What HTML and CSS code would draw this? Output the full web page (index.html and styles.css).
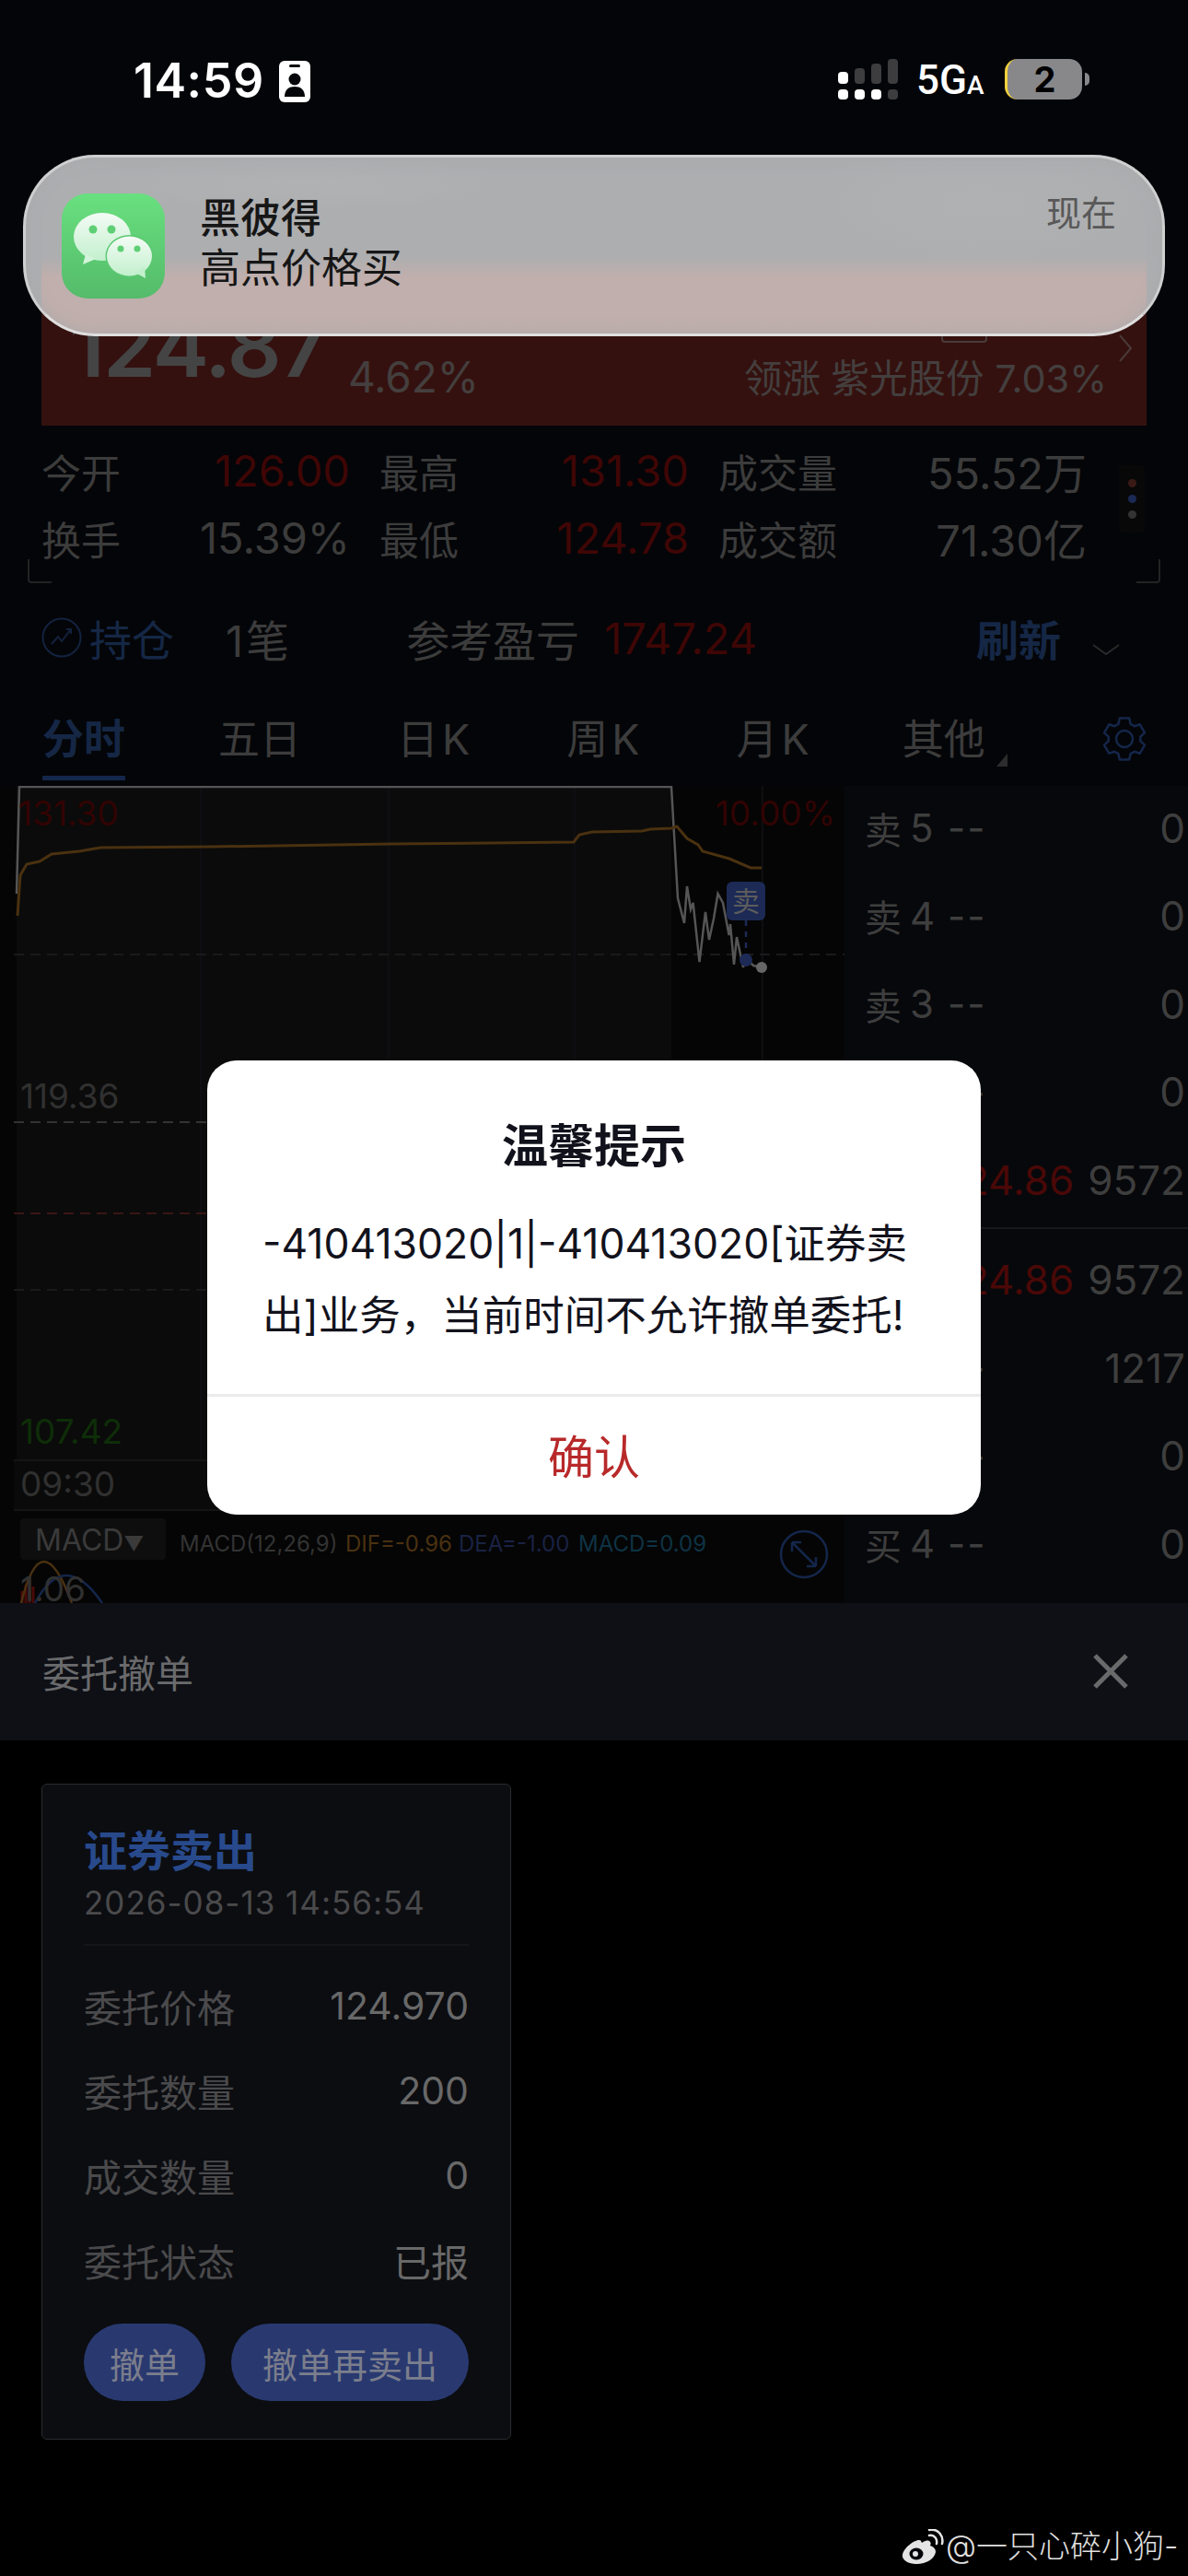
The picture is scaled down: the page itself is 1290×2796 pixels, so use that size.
FILE: index.html
```html
<!DOCTYPE html>
<html lang="zh-CN">
<head>
  <meta charset="UTF-8">
  <meta name="viewport" content="width=device-width, initial-scale=1.0">
  <title>委托撤单</title>
  <link rel="stylesheet" href="styles.css">
</head>
<body>
  <div class="screen">
    <header class="status">
      <div class="status-left">
        <span class="time">14:59</span>
        <svg class="focus" viewBox="0 0 34 45">
          <rect width="34" height="45" rx="6" fill="#fff"/>
          <rect x="11" y="4" width="12" height="3" rx="1.5" fill="#040508"/>
          <circle cx="17" cy="20" r="6.5" fill="#040508"/>
          <path d="M6 39c0-8 5-11 11-11s11 3 11 11z" fill="#040508"/>
        </svg>
      </div>
      <div class="status-right">
        <svg class="signal" viewBox="0 0 65 44">
          <rect x="0" y="14" width="11" height="13" rx="4" fill="#fff"/>
          <rect x="18" y="10" width="11" height="17" rx="4" fill="#3d3d3f"/>
          <rect x="36" y="5" width="11" height="22" rx="4" fill="#3d3d3f"/>
          <rect x="54" y="0" width="11" height="27" rx="4" fill="#3d3d3f"/>
          <rect x="0" y="33" width="11" height="11" rx="4" fill="#fff"/>
          <rect x="18" y="33" width="11" height="11" rx="4" fill="#fff"/>
          <rect x="36" y="33" width="11" height="11" rx="4" fill="#fff"/>
          <rect x="54" y="33" width="11" height="11" rx="4" fill="#3d3d3f"/>
        </svg>
        <span class="net">5G<small>A</small></span>
        <div class="battery"><span>2</span></div>
        <i class="battery-tip"></i>
      </div>
    </header>

    <section class="quote">
      <div class="quote-price">124.87</div>
      <div class="quote-pct">4.62%</div>
      <div class="quote-lead">
        <i class="lead-box"></i>
        <span>领涨 紫光股份 7.03%</span>
      </div>
      <svg class="quote-arrow" viewBox="0 0 16 32"><path d="M2 2l12 14L2 30" /></svg>
    </section>

    <section class="stats">
      <div class="stat"><span>今开</span><b class="red">126.00</b></div>
      <div class="stat"><span>最高</span><b class="red">131.30</b></div>
      <div class="stat"><span>成交量</span><b>55.52万</b></div>
      <div class="stat"><span>换手</span><b>15.39%</b></div>
      <div class="stat"><span>最低</span><b class="red">124.78</b></div>
      <div class="stat"><span>成交额</span><b>71.30亿</b></div>
      <div class="dots"><i></i><i></i><i></i></div>
      <i class="corner corner-left"></i>
      <i class="corner corner-right"></i>
    </section>

    <section class="hold">
      <svg class="hold-icon" viewBox="0 0 44 44">
        <circle cx="22" cy="22" r="20.5"/>
        <path d="M11 29l7-8 4 5 10-13M27 13h5v5"/>
      </svg>
      <span class="hold-name">持仓</span>
      <span class="hold-count">1笔</span>
      <span class="hold-label">参考盈亏</span>
      <span class="red">1747.24</span>
      <span class="hold-refresh">刷新</span>
      <svg class="hold-chevron" viewBox="0 0 32 14"><path d="M2 2l14 10L30 2"/></svg>
    </section>

    <nav class="tabs">
      <a class="tab active">分时</a>
      <a class="tab">五日</a>
      <a class="tab tab-k tab-day">日K</a>
      <a class="tab tab-k">周K</a>
      <a class="tab tab-k">月K</a>
      <a class="tab more">其他</a>
      <svg class="gear" viewBox="0 0 48 48">
        <path d="M18.800 1.600H29.200L30.600 7.800L34.800 10.200L40.800 8.300L46 17.300L41.300 21.600V26.400L46 30.700L40.800 39.700L34.800 37.800L30.600 40.200L29.200 46.400H18.800L17.400 40.200L13.200 37.800L7.200 39.700L2 30.700L6.700 26.400V21.600L2 17.300L7.200 8.300L13.200 10.200L17.400 7.800Z"/>
        <circle cx="24" cy="24" r="9"/>
      </svg>
    </nav>

    <section class="market">
      <svg class="chart" viewBox="0 853 917 887">
        <rect class="c-under" x="18" y="853" width="711" height="732"/>
        <path class="c-grid" d="M218 853V1585M422 853V1585M624 853V1585M828 853V1585"/>
        <path class="c-dash-dark" d="M15 1036H917M15 1400H917"/>
        <path class="c-dash" d="M15 1218H917"/>
        <path class="c-dash-red" d="M15 1317H917"/>
        <path class="c-line" d="M18 970L21 854H729L736 975L743 1002L746 962L750 987L752.600 980L759.500 1044L766 990L770 1020L775 997L779.500 970L785 980L791.600 1015L793 1003L797 1047L800 1017L807 1050L810 1040L818 1048L827 1050"/>
        <path class="c-avg" d="M19 994L22 950L29 938L43 935L56 927L86 924L109 920L230 919L425 916L623 914L629 906L643 903L697 902L706 900L729 899L735 897L746 910L758 917L763 924L792 932L815 942L827 942"/>
        <text class="c-text c-red" x="20" y="896">131.30</text>
        <text class="c-text c-red" x="907" y="896" text-anchor="end">10.00%</text>
        <rect class="c-mark" x="789" y="957" width="42" height="42" rx="6"/>
        <text class="c-mark-text" x="810" y="989" text-anchor="middle">卖</text>
        <path class="c-mark-link" d="M810 999V1036"/>
        <circle class="c-mark" cx="810" cy="1042" r="7"/>
        <circle class="c-dot" cx="827" cy="1050" r="6"/>
        <text class="c-text" x="22" y="1203">119.36</text>
        <text class="c-text c-green" x="22" y="1567">107.42</text>
        <rect class="c-band" x="15" y="1585" width="902" height="54"/>
        <path class="c-sep" d="M15 1585H917M15 1639H917"/>
        <text class="c-text" x="22" y="1624">09:30</text>
        <rect class="c-pill" x="22" y="1648" width="158" height="45" rx="4"/>
        <text class="c-pill-text" x="38" y="1683">MACD<tspan class="c-caret">▼</tspan></text>
        <text class="c-small" x="195" y="1684">MACD(12,26,9)</text>
        <text class="c-small c-orange" x="375" y="1684">DIF=-0.96</text>
        <text class="c-small c-navy" x="498" y="1684">DEA=-1.00</text>
        <text class="c-small c-teal" x="628" y="1684">MACD=0.09</text>
        <circle class="c-expand" cx="873" cy="1687" r="25"/>
        <path class="c-expand" d="M860 1674l26 26M860 1674v10M860 1674h10M886 1700v-10M886 1700h-10"/>
        <path class="c-bars" d="M24 1740V1727M28 1740V1720M32 1740V1716M36 1740V1722"/>
        <path class="c-arc-o" d="M23 1740Q45 1650 78 1740"/>
        <path class="c-arc-b" d="M38 1740Q70 1680 111 1740"/>
        <text class="c-text" x="22" y="1738">1.06</text>
      </svg>

      <div class="book">
        <div class="level"><span class="side">卖</span><span class="idx">5</span><span class="none">--</span><span class="qty">0</span></div>
        <div class="level"><span class="side">卖</span><span class="idx">4</span><span class="none">--</span><span class="qty">0</span></div>
        <div class="level"><span class="side">卖</span><span class="idx">3</span><span class="none">--</span><span class="qty">0</span></div>
        <div class="level"><span class="side">卖</span><span class="idx">2</span><span class="none">--</span><span class="qty">0</span></div>
        <div class="level"><span class="side">卖</span><span class="idx">1</span><span class="price">124.86</span><span class="qty">9572</span></div>
        <div class="book-line"></div>
        <div class="level"><span class="side">买</span><span class="idx">1</span><span class="price">124.86</span><span class="qty">9572</span></div>
        <div class="level"><span class="side">买</span><span class="idx">2</span><span class="none">--</span><span class="qty">1217</span></div>
        <div class="level"><span class="side">买</span><span class="idx">3</span><span class="none">--</span><span class="qty">0</span></div>
        <div class="level"><span class="side">买</span><span class="idx">4</span><span class="none">--</span><span class="qty">0</span></div>
      </div>
    </section>

    <header class="sheet-head">
      <span>委托撤单</span>
      <svg class="sheet-close" viewBox="0 0 40 40"><path d="M3 3l34 34M37 3L3 37"/></svg>
    </header>

    <main class="sheet-body">
      <article class="order">
        <h2 class="order-type">证券卖出</h2>
        <p class="order-time">2026-08-13 14:56:54</p>
        <div class="order-rows">
          <div class="order-row"><span>委托价格</span><span class="order-val">124.970</span></div>
          <div class="order-row"><span>委托数量</span><span class="order-val">200</span></div>
          <div class="order-row"><span>成交数量</span><span class="order-val">0</span></div>
          <div class="order-row"><span>委托状态</span><span class="order-val">已报</span></div>
        </div>
        <div class="order-actions">
          <button class="pill">撤单</button>
          <button class="pill pill-wide">撤单再卖出</button>
        </div>
      </article>
    </main>

    <div class="banner">
      <svg class="wechat" viewBox="0 0 112 114">
        <defs>
          <linearGradient id="wxBg" x1="0" y1="0" x2="0" y2="1">
            <stop offset="0" stop-color="#69e07f"/>
            <stop offset="1" stop-color="#54bb6a"/>
          </linearGradient>
          <linearGradient id="wxBubble" x1="0" y1="0" x2="0" y2="1">
            <stop offset="0" stop-color="#f4fbf5"/>
            <stop offset="1" stop-color="#c2f0cd"/>
          </linearGradient>
        </defs>
        <rect width="112" height="114" rx="28" fill="url(#wxBg)"/>
        <ellipse cx="44" cy="47" rx="31" ry="26" fill="url(#wxBubble)"/>
        <path d="M26 66l-3 11 14-6z" fill="#d3f4da"/>
        <circle cx="34" cy="39" r="4.500" fill="#5fcf75"/>
        <circle cx="54" cy="39" r="4.500" fill="#5fcf75"/>
        <ellipse cx="73.500" cy="68" rx="26" ry="23" fill="#5cc873"/>
        <ellipse cx="73.500" cy="68" rx="24.500" ry="21.500" fill="url(#wxBubble)"/>
        <path d="M80 86l11 6-1-13z" fill="#c2f0cd"/>
        <circle cx="64" cy="60" r="3.500" fill="#5fcf75"/>
        <circle cx="82" cy="60" r="3.500" fill="#5fcf75"/>
      </svg>
      <div class="banner-text">
        <div class="banner-name">黑彼得</div>
        <div class="banner-msg">高点价格买</div>
      </div>
      <span class="banner-time">现在</span>
    </div>

    <div class="dialog">
      <h1 class="dialog-title">温馨提示</h1>
      <p class="dialog-msg">-410413020|1|-410413020[证券卖出]业务，当前时间不允许撤单委托!</p>
      <button class="dialog-btn">确认</button>
    </div>

    <div class="mark">
      <svg class="weibo" viewBox="0 0 46 38">
        <path d="M30 13c-3-1-5 0-8 2-1-2-1-3-3-3-6 0-17 9-18 16-1 6 7 10 15 10 11 0 20-6 21-13 0-4-3-6-6-7 1-2 1-4-1-5z" fill="#e4e4e4"/>
        <ellipse cx="16" cy="27" rx="7.500" ry="6.500" fill="#040508"/>
        <circle cx="15" cy="27" r="3" fill="#e4e4e4"/>
        <path d="M30 7c6-1 9 4 8 9M30 1c10-2 16 7 14 15" fill="none" stroke="#e4e4e4" stroke-width="2.500" stroke-linecap="round"/>
      </svg>
      <span>@一只心碎小狗-</span>
    </div>
  </div>
</body>
</html>
```

FILE: styles.css
```css
* {
  box-sizing: border-box;
}

html, body {
  margin: 0;
  padding: 0;
  background: #000;
}

body {
  font-family: Inter, "Noto Sans CJK SC", sans-serif;
}

.screen {
  position: relative;
  width: 1290px;
  height: 2796px;
  overflow: hidden;
  display: flex;
  flex-direction: column;
  background: #040508;
  color: #3c3c3c;
}

.red {
  color: #3f0605;
}

/* status bar */
.status {
  height: 290px;
  flex-shrink: 0;
  display: flex;
  justify-content: space-between;
  align-items: flex-start;
  padding: 65px 107px 0 145px;
}

.status-left {
  display: flex;
  align-items: center;
  gap: 16px;
}

.time {
  font-size: 52px;
  line-height: 46px;
  font-weight: 600;
  letter-spacing: 0.500px;
  color: #fff;
}

.focus {
  width: 34px;
  height: 45px;
}

.status-right {
  display: flex;
  align-items: center;
  height: 44px;
  margin-top: -1px;
}

.signal {
  width: 65px;
  height: 44px;
}

.net {
  margin: 8px 0 0 20px;
  width: 74px;
  font-family: Roboto, sans-serif;
  font-size: 44px;
  line-height: 44px;
  font-weight: 500;
  color: #fff;
}

.net small {
  font-size: 28px;
}

.battery {
  margin-left: 22px;
  width: 84px;
  height: 44px;
  border-radius: 14px;
  border-left: 3px solid #f3d23c;
  background: #88888a;
  display: flex;
  align-items: center;
  justify-content: center;
}

.battery span {
  font-size: 38px;
  font-weight: 700;
  color: #000;
}

.battery-tip {
  margin-left: 3px;
  width: 5px;
  height: 14px;
  border-radius: 0 6px 6px 0;
  background: #88888a;
}

/* quote bar behind the notification */
.quote {
  position: relative;
  height: 172px;
  flex-shrink: 0;
  margin: 0 45px;
  background: #34110f;
  color: #443f3e;
}

.quote-price {
  position: absolute;
  left: 30px;
  top: 31px;
  font-size: 92px;
  line-height: 110px;
  font-weight: 600;
  letter-spacing: -2px;
  color: #444;
}

.quote-pct {
  position: absolute;
  left: 333px;
  top: 93px;
  font-size: 46px;
  line-height: 52px;
}

.quote-lead {
  position: absolute;
  right: 43px;
  top: 69px;
  display: flex;
  flex-direction: column;
  align-items: flex-end;
  font-size: 41.500px;
  line-height: 52px;
}

.lead-box {
  width: 50px;
  height: 15px;
  margin-right: 130px;
  margin-top: -2px;
  margin-bottom: 13px;
  border: 2px solid #4a3a3a;
  border-top: 0;
  border-radius: 0 0 4px 4px;
}

.quote-arrow {
  position: absolute;
  right: 15px;
  top: 72px;
  width: 16px;
  height: 32px;
  fill: none;
  stroke: #4a3a3a;
  stroke-width: 2;
}

/* day stats */
.stats {
  position: relative;
  flex-shrink: 0;
  margin-top: 12px;
  padding-left: 45px;
  display: grid;
  grid-template-columns: 367px 368px 400px;
  grid-auto-rows: 73px;
  font-size: 43px;
}

.stat {
  display: flex;
  justify-content: space-between;
  align-items: center;
  padding-right: 32px;
}

.stat:nth-child(3n) {
  padding-right: 0;
}

.stat b {
  font-size: 47px;
  font-weight: 400;
}

.dots {
  position: absolute;
  right: 47px;
  top: 31px;
  width: 28px;
  height: 73px;
  display: flex;
  flex-direction: column;
  align-items: center;
  justify-content: center;
  gap: 8px;
  background: #080808;
  border-radius: 4px;
}

.dots i {
  width: 9px;
  height: 9px;
  border-radius: 50%;
  background: #3a1a15;
}

.dots i:nth-child(2) {
  background: #1a2a55;
}

.dots i:nth-child(3) {
  background: #333;
}

.corner {
  position: absolute;
  top: 133px;
  width: 26px;
  height: 26px;
  border-bottom: 2px solid #232323;
}

.corner-left {
  left: 30px;
  border-left: 2px solid #232323;
  border-bottom-left-radius: 4px;
}

.corner-right {
  right: 30px;
  border-right: 2px solid #232323;
  border-bottom-right-radius: 4px;
}

/* holdings row */
.hold {
  position: relative;
  height: 94px;
  flex-shrink: 0;
  margin-top: 25px;
  padding-left: 45px;
  display: flex;
  align-items: center;
  font-size: 47px;
}

.hold-icon {
  width: 44px;
  height: 44px;
  fill: none;
  stroke: #13223f;
  stroke-width: 2;
}

.hold-name {
  margin-left: 8px;
  font-size: 46px;
  color: #152745;
}

.hold-count {
  margin-left: 56px;
  letter-spacing: 3px;
}

.hold-label {
  margin-left: 124px;
  margin-right: 27px;
}

.hold-refresh {
  position: absolute;
  left: 1060px;
  font-size: 46px;
  font-weight: 700;
  color: #152745;
}

.hold-chevron {
  position: absolute;
  left: 1185px;
  top: 53px;
  width: 32px;
  height: 14px;
  fill: none;
  stroke: #2a2a2a;
  stroke-width: 2;
}

/* period tabs */
.tabs {
  position: relative;
  height: 100px;
  flex-shrink: 0;
  margin-top: 14px;
  padding: 0 45px 0 46px;
  display: flex;
  align-items: center;
  gap: 101px;
  font-size: 45px;
  line-height: 60px;
}

.tab-k {
  letter-spacing: 4px;
}

.tab-day {
  margin-left: 3px;
}

.tab.active {
  position: relative;
  font-weight: 700;
  color: #152745;
}

.tab.active::after {
  content: "";
  position: absolute;
  left: 0;
  right: 0;
  bottom: -14px;
  height: 5px;
  background: #14264a;
}

.tab.more {
  position: relative;
  margin-left: -4px;
}

.tab.more::after {
  content: "";
  position: absolute;
  right: -24px;
  bottom: 1px;
  border-left: 12px solid transparent;
  border-bottom: 14px solid #2c2c2c;
}

.gear {
  position: absolute;
  left: 1197px;
  top: 25px;
  width: 48px;
  height: 48px;
  fill: none;
  stroke: #14264a;
  stroke-width: 2.500;
  stroke-linejoin: round;
}

/* chart and order book */
.market {
  height: 887px;
  flex-shrink: 0;
  display: flex;
  overflow: hidden;
}

.chart {
  width: 917px;
  height: 887px;
  flex-shrink: 0;
  background: #050505;
}

.c-under {
  fill: #0b0b0b;
}

.c-grid {
  stroke: #0f0f12;
  stroke-width: 2;
}

.c-dash-dark {
  stroke: #1a1a1c;
  stroke-width: 2;
  stroke-dasharray: 11 7;
}

.c-dash {
  stroke: #333;
  stroke-width: 2;
  stroke-dasharray: 11 7;
}

.c-dash-red {
  stroke: #3a1615;
  stroke-width: 2;
  stroke-dasharray: 11 7;
}

.c-line {
  fill: none;
  stroke: #555;
  stroke-width: 2.500;
}

.c-avg {
  fill: none;
  stroke: #4a3110;
  stroke-width: 3;
}

.c-text {
  font-size: 37px;
  fill: #303030;
}

.c-red {
  fill: #320303;
}

.c-green {
  fill: #0e2e08;
}

.c-mark {
  fill: #1c2a55;
}

.c-mark-text {
  font-size: 30px;
  fill: #5c5c5c;
}

.c-mark-link {
  stroke: #1c2a55;
  stroke-width: 2.500;
  stroke-dasharray: 6 6;
}

.c-dot {
  fill: #666;
}

.c-band {
  fill: #0a0a0a;
}

.c-sep {
  stroke: #141414;
  stroke-width: 2;
}

.c-pill {
  fill: #0e0e0e;
}

.c-pill-text {
  font-size: 32px;
  fill: #3a3a3a;
}

.c-caret {
  font-size: 22px;
}

.c-small {
  font-size: 24px;
  fill: #333;
}

.c-orange {
  fill: #4a3110;
}

.c-navy {
  fill: #1a2244;
}

.c-teal {
  fill: #0e3344;
}

.c-expand {
  fill: none;
  stroke: #14264a;
  stroke-width: 2.500;
}

.c-bars {
  stroke: #4a0a08;
  stroke-width: 3;
}

.c-arc-o {
  fill: none;
  stroke: #4a3110;
  stroke-width: 2.500;
}

.c-arc-b {
  fill: none;
  stroke: #14264a;
  stroke-width: 2.500;
}

.book {
  flex: 1;
  margin-top: -2px;
  background: #07080b;
  font-size: 44px;
  color: #3e3e3e;
}

.level {
  height: 95.500px;
  padding: 0 8px 0 22px;
  display: flex;
  align-items: center;
}

.side {
  width: 49px;
  font-size: 40px;
}

.idx {
  width: 41px;
  font-size: 42px;
}

.none {
  font-size: 42px;
  letter-spacing: 2px;
}

.price {
  margin-left: auto;
  color: #4a0807;
}

.qty {
  margin-left: auto;
}

.price + .qty {
  margin-left: 15px;
}

.book-line {
  height: 10px;
  margin-left: 22px;
  border-top: 2px solid #18191c;
  margin-top: 3px;
}

/* cancel order sheet */
.sheet-head {
  height: 149px;
  flex-shrink: 0;
  padding: 0 64px 2px 46px;
  display: flex;
  justify-content: space-between;
  align-items: center;
  background: #0e1015;
  font-size: 41px;
  color: #6a6a6c;
}

.sheet-close {
  width: 40px;
  height: 40px;
  fill: none;
  stroke: #6a6a6c;
  stroke-width: 5;
}

.sheet-body {
  flex: 1;
  background: #000;
  padding: 47px 0 0 45px;
}

.order {
  width: 510px;
  height: 712px;
  padding: 46px 45px 0 45px;
  background: #0c0d11;
  border: 1px solid #2a2b2e;
  border-radius: 6px;
}

.order-type {
  margin: 0;
  font-size: 47px;
  line-height: 52px;
  font-weight: 600;
  color: #284a8c;
}

.order-time {
  margin: 6px 0 0;
  padding-bottom: 21px;
  border-bottom: 2px solid #141518;
  font-size: 35px;
  line-height: 48px;
  letter-spacing: 1px;
  color: #4a4a4c;
}

.order-rows {
  margin-top: 19px;
}

.order-row {
  height: 92px;
  display: flex;
  justify-content: space-between;
  align-items: center;
  font-size: 41px;
  color: #4a4a4c;
}

.order-val {
  color: #686868;
}

.order-actions {
  margin-top: 23px;
  display: flex;
  justify-content: space-between;
}

.pill {
  width: 132px;
  height: 84px;
  padding: 0;
  border: 0;
  border-radius: 42px;
  background: #293970;
  font-family: inherit;
  font-size: 38px;
  color: #7b7e8c;
}

.pill-wide {
  width: 258px;
}

/* notification banner */
.banner {
  position: absolute;
  left: 25px;
  top: 168px;
  width: 1240px;
  height: 197px;
  padding: 39px 50px 0 39px;
  display: flex;
  gap: 38px;
  border-radius: 78px;
  border: 3px solid #cfcfd0;
  border-bottom-color: #dedede;
  background:
    radial-gradient(ellipse 230px 30px at 300px 30px, rgba(190, 190, 190, 0.25), transparent),
    radial-gradient(ellipse 190px 70px at 1040px 50px, rgba(190, 190, 190, 0.2), transparent),
    linear-gradient(180deg, transparent 56%, #c0afad 68%, #c1afac 100%) center / 1200px 100% no-repeat,
    #adaeb0;
  box-shadow: inset 0 0 16px rgba(170, 170, 172, 0.9);
}

.wechat {
  width: 112px;
  height: 114px;
  flex-shrink: 0;
}

.banner-text {
  flex: 1;
  color: #161616;
}

.banner-name {
  font-size: 44px;
  line-height: 54px;
  font-weight: 500;
}

.banner-msg {
  font-size: 44px;
  line-height: 54px;
}

.banner-time {
  margin-top: -2px;
  font-size: 38px;
  line-height: 46px;
  color: #585858;
}

/* alert dialog */
.dialog {
  position: absolute;
  left: 225px;
  top: 1151px;
  width: 840px;
  height: 493px;
  display: flex;
  flex-direction: column;
  border-radius: 32px;
  background: #fff;
  color: #12121c;
}

.dialog-title {
  margin: 64px 0 0;
  text-align: center;
  font-size: 50px;
  line-height: 58px;
  font-weight: 600;
}

.dialog-msg {
  flex: 1;
  margin: 38px 60px 0 60px;
  font-size: 44.500px;
  line-height: 78px;
  word-break: break-all;
}

.dialog-btn {
  height: 131px;
  padding: 0 0 5px;
  border: 0;
  border-top: 3px solid #ebebec;
  background: transparent;
  font-family: inherit;
  font-size: 50px;
  color: #b8292a;
}

/* watermark */
.mark {
  position: absolute;
  left: 979px;
  top: 2745px;
  display: flex;
  align-items: center;
  gap: 2px;
  font-size: 34px;
  line-height: 38px;
  font-weight: 300;
  color: #e0e0e0;
  white-space: nowrap;
}

.weibo {
  width: 46px;
  height: 38px;
}
```
